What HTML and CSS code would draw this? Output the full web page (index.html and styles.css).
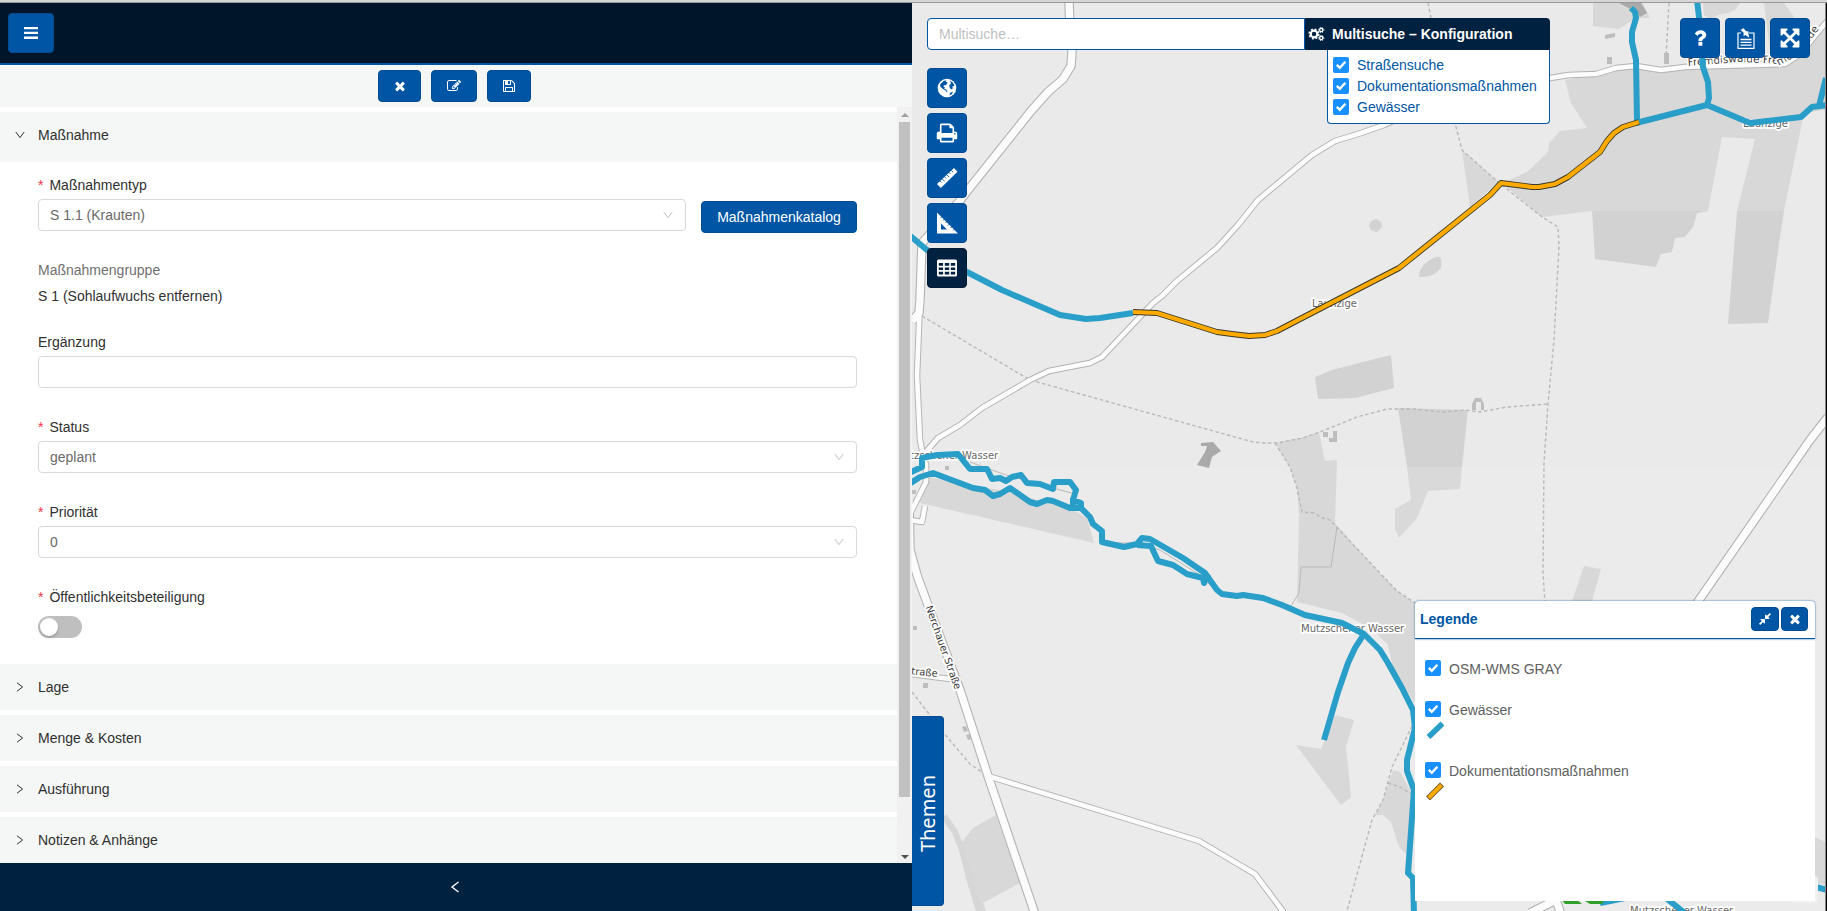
FILE: index.html
```html
<!DOCTYPE html>
<html lang="de">
<head>
<meta charset="utf-8">
<title>Maßnahme</title>
<link rel="stylesheet" href="styles.css">
</head>
<body>
<svg class="sprite" width="0" height="0">
  <symbol id="i-times" viewBox="0 0 1792 1792"><path d="M1490 1322q0 40-28 68l-136 136q-28 28-68 28t-68-28l-294-294-294 294q-28 28-68 28t-68-28l-136-136q-28-28-28-68t28-68l294-294-294-294q-28-28-28-68t28-68l136-136q28-28 68-28t68 28l294 294 294-294q28-28 68-28t68 28l136 136q28 28 28 68t-28 68l-294 294 294 294q28 28 28 68z"/></symbol>
  <symbol id="i-edit" viewBox="0 0 1792 1792"><path d="M888 1184l116-116-152-152-116 116v56h96v96h56zm440-720q-16-16-33 1l-350 350q-17 17-1 33t33-1l350-350q17-17 1-33zm80 594v190q0 119-84.5 203.5t-203.5 84.5h-832q-119 0-203.5-84.5t-84.5-203.5v-832q0-119 84.5-203.5t203.5-84.5h832q63 0 117 25 15 7 18 23 3 17-9 29l-49 49q-14 14-32 8-23-6-45-6h-832q-66 0-113 47t-47 113v832q0 66 47 113t113 47h832q66 0 113-47t47-113v-126q0-13 9-22l64-64q15-15 35-7t20 29zm-96-738l288 288-672 672h-288v-288zm444 132l-92 92-288-288 92-92q28-28 68-28t68 28l152 152q28 28 28 68t-28 68z"/></symbol>
  <symbol id="i-save" viewBox="0 0 1792 1792"><path d="M512 1536h768v-384h-768v384zm896 0h128v-896q0-14-10-38.5t-20-34.5l-281-281q-10-10-34-20t-39-10v416q0 40-28 68t-68 28h-576q-40 0-68-28t-28-68v-416h-128v1280h128v-416q0-40 28-68t68-28h832q40 0 68 28t28 68v416zm-384-928v-320q0-13-9.5-22.5t-22.5-9.5h-192q-13 0-22.5 9.5t-9.5 22.5v320q0 13 9.5 22.5t22.5 9.5h192q13 0 22.5-9.5t9.5-22.5zm640 32v928q0 40-28 68t-68 28h-1344q-40 0-68-28t-28-68v-1344q0-40 28-68t68-28h928q40 0 88 20t76 48l280 280q28 28 48 76t20 88z"/></symbol>
  <symbol id="i-print" viewBox="0 0 1792 1792"><path d="M448 1536h896v-256h-896v256zm0-640h896v-384h-160q-40 0-68-28t-28-68v-160h-640v640zm1152 64q0-26-19-45t-45-19-45 19-19 45 19 45 45 19 45-19 19-45zm128 0v416q0 13-9.5 22.5t-22.5 9.5h-224v160q0 40-28 68t-68 28h-960q-40 0-68-28t-28-68v-160h-224q-13 0-22.5-9.5t-9.5-22.5v-416q0-79 56.5-135.5t135.5-56.5h64v-544q0-40 28-68t68-28h672q40 0 88 20t76 48l152 152q28 28 48 76t20 88v256h64q79 0 135.5 56.5t56.5 135.5z"/></symbol>
  <symbol id="i-expand" viewBox="0 0 1792 1792"><path d="M1411 541l-355 355 355 355 144-144q29-31 70-14 39 17 39 59v448q0 26-19 45t-45 19h-448q-42 0-59-40-17-39 14-69l144-144-355-355-355 355 144 144q31 30 14 69-17 40-59 40h-448q-26 0-45-19t-19-45v-448q0-42 40-59 39-17 69 14l144 144 355-355-355-355-144 144q-19 19-45 19-12 0-24-5-40-17-40-59v-448q0-26 19-45t45-19h448q42 0 59 40 17 39-14 69l-144 144 355 355 355-355-144-144q-31-30-14-69 17-40 59-40h448q26 0 45 19t19 45v448q0 42-39 59-13 5-25 5-26 0-45-19z"/></symbol>
  <symbol id="i-question" viewBox="0 0 1792 1792"><path d="M1088 1256v240q0 16-12 28t-28 12h-240q-16 0-28-12t-12-28v-240q0-16 12-28t28-12h240q16 0 28 12t12 28zm316-600q0 54-15.5 101t-35 76.5-55 59.5-57.5 43.5-61 35.5q-41 23-68.5 65t-27.5 67q0 17-12 32.5t-28 15.5h-240q-15 0-25.5-18.5t-10.5-37.5v-45q0-83 65-156.5t143-108.5q59-27 84-56t25-76q0-42-46.5-74t-107.5-32q-65 0-108 29-35 25-107 115-13 16-31 16-12 0-25-8l-164-125q-13-10-15.5-25t5.5-28q160-266 464-266 80 0 161 31t146 83 106 127.5 41 158.5z"/></symbol>
  <symbol id="i-compress" viewBox="0 0 1792 1792"><path d="M896 960v448q0 26-19 45t-45 19-45-19l-144-144-332 332q-10 10-23 10t-23-10l-114-114q-10-10-10-23t10-23l332-332-144-144q-19-19-19-45t19-45 45-19h448q26 0 45 19t19 45zm755-672q0 13-10 23l-332 332 144 144q19 19 19 45t-19 45-45 19h-448q-26 0-45-19t-19-45v-448q0-26 19-45t45-19 45 19l144 144 332-332q10-10 23-10t23 10l114 114q10 10 10 23z"/></symbol>
  <symbol id="i-chev" viewBox="0 0 12 12"><path d="M1.800 3L6 8.600 10.200 3" fill="none" stroke="currentColor" stroke-width="1"/></symbol>
  <symbol id="i-check" viewBox="0 0 16 16"><path d="M3.800 7.800l3 3 5.600-6" fill="none" stroke="#fff" stroke-width="2.400"/></symbol>
</svg>
<div class="window-edge"></div>
<div class="app">
  <section class="side">
    <header class="side-head">
      <button class="btn menu-btn"><svg width="14" height="14" viewBox="0 0 14 14"><path d="M0 1h14v2.300H0zM0 5.800h14v2.300H0zM0 10.600h14v2.300H0z"/></svg></button>
    </header>
    <div class="toolbar">
      <button class="btn t1"><svg class="i14"><use href="#i-times"/></svg></button>
      <button class="btn t2"><svg class="i14"><use href="#i-edit"/></svg></button>
      <button class="btn t3"><svg class="i14"><use href="#i-save"/></svg></button>
    </div>
    <div class="scroll-area">
      <div class="panels">
        <div class="panel-head open"><svg class="chev"><use href="#i-chev"/></svg>Maßnahme</div>
        <div class="form">
          <div class="row">
            <div class="item grow"><label class="req">Maßnahmentyp</label><div class="select">S 1.1 (Krauten)<svg class="chev"><use href="#i-chev"/></svg></div></div>
            <button class="btn catalog">Maßnahmenkatalog</button>
          </div>
          <div class="item group"><label class="muted">Maßnahmengruppe</label><div>S 1 (Sohlaufwuchs entfernen)</div></div>
          <div class="item"><label>Ergänzung</label><div class="select"></div></div>
          <div class="item"><label class="req">Status</label><div class="select">geplant<svg class="chev"><use href="#i-chev"/></svg></div></div>
          <div class="item"><label class="req">Priorität</label><div class="select">0<svg class="chev"><use href="#i-chev"/></svg></div></div>
          <div class="item last"><label class="req">Öffentlichkeitsbeteiligung</label><div class="switch"><span class="knob"></span></div></div>
        </div>
        <div class="panel-head"><svg class="chev right"><use href="#i-chev"/></svg>Lage</div>
        <div class="panel-head"><svg class="chev right"><use href="#i-chev"/></svg>Menge &amp; Kosten</div>
        <div class="panel-head"><svg class="chev right"><use href="#i-chev"/></svg>Ausführung</div>
        <div class="panel-head"><svg class="chev right"><use href="#i-chev"/></svg>Notizen &amp; Anhänge</div>
      </div>
      <div class="scrollbar"><span class="up"></span><span class="thumb"></span><span class="down"></span></div>
    </div>
    <footer class="side-foot"><svg width="10" height="14" viewBox="0 0 10 14"><path d="M8.500 2L2 7l6.500 5" fill="none" stroke="#fff" stroke-width="1.400"/></svg></footer>
  </section>

  <section class="map">
    <svg class="map-canvas" width="913" height="908" viewBox="912 3 913 908">
      <rect x="912" y="3" width="913" height="464" fill="#eaeaea"/>
      <rect x="912" y="467" width="913" height="444" fill="#ebebeb"/>
      <g fill="#d8d8d8">
        <path d="M1565 80L1571 103 1587 128 1560 131 1549 143 1548 152 1527 172 1502 183 1542 217 1592 211H1708L1722 137 1755 139 1737 211H1784L1804 113 1825 110V20L1800 50 1785 62 1740 64 1685 67 1661 70 1636 66 1616 68 1596 74Z"/>
        <path d="M1462 150L1498 182 1470 207Z"/>
        <path d="M1593 3V26L1619 29 1636 18 1650 18 1643 3Z"/>
        <path d="M1703 3H1740L1735 10 1727 13 1718 15 1710 20 1704 15ZM1764 3H1784L1794 17V50H1770Z"/>
        <path d="M1275 443L1300 438 1319 432 1325 461 1337 460 1335 523 1363 555 1397 591 1415 603V704L1393 668 1388 645 1373 630 1342 613 1297 602 1299 513 1297 488 1290 467Z"/>
        <path d="M1335 715L1354 720 1346 747 1351 797 1341 805 1296 745 1321 749Z"/>
        <path d="M1393 770L1400 772 1413 795 1412 875 1407 855 1399 847 1391 822 1383 815H1375L1383 800Z"/>
        <path d="M928 477L1010 492 1073 510 1087 518 1094 543 920 503Z"/>
        <path d="M996 815L973 828 962 842 978 911H986L983 903 1020 883Z"/>
        <path d="M1584 566L1601 569 1592 601H1572ZM1800 830L1825 842V885L1800 880Z"/>
      </g>
      <g fill="#d2d2d2">
        <path d="M1592 211L1595 259 1656 267 1661 254 1672 252 1675 238 1685 237 1693 227 1697 213 1708 211ZM1737 211L1728 324 1768 323 1781 230 1784 211Z"/>
        <path d="M1371 221l5-2 5 3 1 5-5 5-6-2-2-4z"/><path d="M1419 277q0-9 8-15t13-5q2 2 1 11-8 10-22 9z"/>
        <path d="M1315 377L1332 370 1363 362 1391 355 1394 388 1355 398 1318 399Z"/>
        <path d="M1398 408L1468 410 1462 467H1407Z"/>
      </g>
      <path d="M1407 467H1462L1460 489 1428 491 1417 518 1399 538 1395 528V509L1411 500Z" fill="#d9d9d9"/>
      <path d="M944 816L955 832 962 850 969 878 979 911" fill="none" stroke="#d6d6d6" stroke-width="6"/>
      <path d="M1201 443L1213 442 1221 451 1212 457 1209 468 1197 465 1205 452 1207 446 1201 446ZM1619 3L1636 12 1640 17 1647 13 1641 3Z" fill="#aaa"/>
      <g fill="#bdbdbd">
        <path d="M945 466h4v4h-4zM912 490h4v4h-4zM913 626h4v4h-4zM923 683h5v5h-5zM962 727l4-1 2 5-4 1zM966 735l4-1 2 5-4 1z"/>
        <path d="M1323 432h5v5h-5zM1333 431h4v11h-8v-4h4zM1605 35l10-2v4l-10 2zM1607 57h5v7h-5zM1664 53h5v11h-5zM1472 410v-6l3-6h6l3 6v6h-3v-8h-5v8z"/>
      </g>
      <g fill="none" stroke="#b9b9b9" stroke-width="1.400" stroke-dasharray="3.500 2.500">
        <path d="M922 316L1030 380 1253 442 1263 443 1277 443 1303 438 1320 432 1357 417 1387 409H1413L1443 412 1465 410 1480 412 1507 407 1548 404"/>
        <path d="M1428 3L1431 18 1456 127 1462 150 1498 182 1542 217 1558 227 1559 247 1554 340 1548 404 1544 463 1543 573 1545 603"/>
        <path d="M1275 443L1290 467 1297 488 1302 512 1315 513 1320 517 1330 520 1363 555 1397 591 1415 603"/>
        <path d="M1412 726L1392 767 1383 800 1372 820 1347 911M1388 783L1400 787 1413 795"/>
        <path d="M912 692L943 732 970 764 983 773M1669 3L1666 57"/>
      </g>
      <path d="M1337 527L1331 567 1301 567 1299 593 1291 606M970 462L1006 475 1075 494M1105 543H1137L1160 550 1200 575 1215 590" fill="none" stroke="#b9b9b9"/>
      <g fill="none" stroke-linejoin="round">
        <g stroke="#b3b3b3">
          <path stroke-width="9.500" d="M1069 0L1070 30 1072 52 1071 66 1063 79 1048 92 1031 111 968 190 958 203 922 243 920 300 919 313 912 321"/>
          <path stroke-width="6.500" d="M920 300L917 376 920 440 923 455 926 465 926 482 910 514M910 520L922 522 925 506M910 674L950 679"/>
          <path stroke-width="9.500" d="M909 500L910 550 917 575 925 597 960 690 988 776 1035 914"/>
          <path stroke-width="6.500" d="M988 776L1199 841 1255 874 1285 914M925 453L938 438 960 425 982 408 1030 380 1049 371 1090 363 1102 357 1153 303 1162 296 1177 281 1217 248 1238 225 1258 200 1312 155 1335 141 1358 134 1384 125 1450 95 1550 78 1569 75 1596 74 1616 68 1636 66 1661 70 1685 67 1785 64 1800 54 1828 20"/>
          <path stroke-width="9.500" d="M1828 417L1810 440 1690 613M1556 900L1530 913M1556 900L1561 914"/>
        </g>
        <g stroke="#fcfcfc">
          <path stroke-width="7.300" d="M1069 0L1070 30 1072 52 1071 66 1063 79 1048 92 1031 111 968 190 958 203 922 243 920 300 919 313 912 321"/>
          <path stroke-width="4.600" d="M920 300L917 376 920 440 923 455 926 465 926 482 910 514M910 520L922 522 925 506M910 674L950 679"/>
          <path stroke-width="7.300" d="M909 500L910 550 917 575 925 597 960 690 988 776 1035 914"/>
          <path stroke-width="4.600" d="M988 776L1199 841 1255 874 1285 914M925 453L938 438 960 425 982 408 1030 380 1049 371 1090 363 1102 357 1153 303 1162 296 1177 281 1217 248 1238 225 1258 200 1312 155 1335 141 1358 134 1384 125 1450 95 1550 78 1569 75 1596 74 1616 68 1636 66 1661 70 1685 67 1785 64 1800 54 1828 20"/>
          <path stroke-width="7.300" d="M1828 417L1810 440 1690 613M1556 900L1530 913M1556 900L1561 914"/>
        </g>
      </g>
      <g class="map-label">
        <text x="1312" y="306.500">Launzige</text>
        <text x="1743" y="126.500">Launzige</text>
        <text x="895" y="459">Mutzschener Wasser</text>
        <text x="1301" y="631.500">Mutzschener Wasser</text>
        <text x="1630" y="914">Mutzschener Wasser</text>
        <path id="street" d="M1688 66L1740 62 1782 64 1800 54 1826 20" fill="none"/>
        <text class="dark wide"><textPath href="#street">Fremdiswalde Fremdiswalde</textPath></text>
        <text class="dark" transform="translate(925.500 607) rotate(70.500)">Nerchauer Straße</text>
        <text class="dark" transform="translate(937.500 677) rotate(6)" text-anchor="end">Straße</text>
      </g>
      <g fill="none" stroke="#289ec8" stroke-width="6" stroke-linejoin="round">
        <path d="M908 234L927 250 967 272 1002 290 1060 315 1086 319 1100 318 1133 313"/>
        <path d="M1637 121L1636 60 1632 42V32L1636 18 1635 12 1631 8"/>
        <path d="M1636 123L1707 105 1750 123 1801 117 1812 107 1828 105M1697 0L1699 17 1703 67 1708 82 1709 98 1707 105M1819 106L1826 78"/>
        <path d="M909 473L922 467V458L937 455 958 454 970 469H987L992 479 1000 478 1006 481 1012 477 1021 475 1027 483 1040 484 1053 489 1054 482H1070L1076 490 1073 500 1081 503V508"/>
        <path d="M1073 498V508M909 484L920 477 933 473 973 488 985 490 993 496 1000 494 1010 488 1030 502 1037 504 1047 500 1053 501 1070 508 1081 508 1090 517 1093 524 1102 531V542L1124 547 1137 544 1142 538 1150 539 1183 558 1205 573 1217 590 1222 594 1237 596 1243 595 1263 598 1282 605 1305 615 1342 623 1364 634 1380 650 1388 663 1402 688 1413 710 1415 728 1407 760V771L1414 790 1408 873 1413 878 1414 914"/>
        <path d="M1137 545L1151 546 1158 561 1173 565 1187 574 1203 578 1204 583 1208 574M1364 634L1355 648 1348 663 1338 692 1324 740"/>
        <path d="M1600 903L1625 898M1666 898L1686 914M1812 886L1827 890"/>
      </g>
      <path d="M1560 898L1565 904H1582L1575 898ZM1580 898L1590 904H1602L1606 898Z" fill="#33a02c"/>
      <g fill="none" stroke-linejoin="round">
        <path id="measure" stroke="#3b3a28" stroke-width="6" d="M1133 312L1157 313 1217 332 1232 334 1249 336 1265 335 1277 331 1300 319 1399 268 1490 195 1501 183 1532 187 1539 187 1555 184 1568 177 1600 152 1607 141 1614 133 1623 127 1639 122"/>
        <path stroke="#ffaa00" stroke-width="4.200" d="M1133 312L1157 313 1217 332 1232 334 1249 336 1265 335 1277 331 1300 319 1399 268 1490 195 1501 183 1532 187 1539 187 1555 184 1568 177 1600 152 1607 141 1614 133 1623 127 1639 122"/>
      </g>
      <rect x="1790" y="876" width="28" height="27" rx="4" fill="#f1f1f1"/>
    </svg>

    <div class="search">
      <div class="search-input">Multisuche…</div>
      <div class="search-config">
        <div class="config-title">
          <svg width="17" height="16" viewBox="0 0 17 16"><g fill="none" stroke="#fff"><circle cx="6" cy="8" r="3.300" stroke-width="2.200"/><circle cx="6" cy="8" r="4.900" stroke-width="1.400" stroke-dasharray="2 1.850"/><circle cx="13.200" cy="4" r="1.600" stroke-width="1.300"/><circle cx="13.200" cy="4" r="2.600" stroke-width="1" stroke-dasharray="1.100 .95"/><circle cx="13.200" cy="12" r="1.600" stroke-width="1.300"/><circle cx="13.200" cy="12" r="2.600" stroke-width="1" stroke-dasharray="1.100 .95"/></g></svg>
          Multisuche – Konfiguration
        </div>
        <div class="config-list">
          <div class="check"><svg class="box"><use href="#i-check"/></svg>Straßensuche</div>
          <div class="check"><svg class="box"><use href="#i-check"/></svg>Dokumentationsmaßnahmen</div>
          <div class="check"><svg class="box"><use href="#i-check"/></svg>Gewässer</div>
        </div>
      </div>
    </div>

    <div class="tools">
      <button class="btn sq"><svg width="20" height="20" viewBox="0 0 20 20"><circle cx="10" cy="10" r="9.300"/><path class="cut" d="M3 6.500L6.500 3 9.500 2.200 8.500 3.800 10.800 4.500 9.800 6 8.500 7.500 7 7 6.500 8.500 8 9.500 7 10.500 9 11.500 10.500 13 9.500 14.500 9 12.800 6 11 3.500 9ZM13 2.600L16 4.800 17.500 8 15.500 8.200 15.800 10.500 14 11.500 12.700 9.500 12.200 7.500 14 5.500ZM13 15L16 13.500 15 16 12.500 17.500Z"/></svg></button>
      <button class="btn sq"><svg class="i22"><use href="#i-print"/></svg></button>
      <button class="btn sq"><svg width="22" height="22" viewBox="0 0 22 22"><path d="M1 17L18 1l3.500 3.700L4.800 21z"/><path class="tick" d="M4 14l1.500 1.500M6.200 11.900l2.500 2.500M8.500 9.700l1.500 1.500M10.700 7.600l2.500 2.500M13 5.500l1.500 1.500M15.200 3.300l2 2"/></svg></button>
      <button class="btn sq"><svg width="22" height="22" viewBox="0 0 22 22"><path fill-rule="evenodd" d="M1 .5L22 21.500H1zM5 11.500V17.500H11z"/><path class="tick" d="M6 4.500l-1.500 1.500M8.500 7l-1.500 1.500M11 9.500l-1.500 1.500M13.500 12l-1.500 1.500M16 14.500l-1.500 1.500M18.500 17l-1.500 1.500"/></svg></button>
      <button class="btn sq active"><svg width="20" height="18" viewBox="0 0 20 18"><path fill-rule="evenodd" d="M1.500.5h17q1.500 0 1.500 1.500v14q0 1.500-1.500 1.500h-17Q0 17.500 0 16V2Q0 .5 1.500.5zM1.800 4v2.700h4.300V4zm6 0v2.700h4.400V4zm6 0v2.700h4.400V4zM1.800 8.400v2.700h4.300V8.400zm6 0v2.700h4.400V8.400zm6 0v2.700h4.400V8.400zM1.800 12.800v2.700h4.300v-2.700zm6 0v2.700h4.400v-2.700zm6 0v2.700h4.400v-2.700z"/></svg></button>
    </div>

    <div class="actions">
      <button class="btn sq"><svg class="i22"><use href="#i-question"/></svg></button>
      <button class="btn sq"><svg class="note" width="20" height="22" viewBox="0 0 20 22"><path d="M5 5H2v15.300h16V5h-5" fill="none" stroke="#fff" stroke-width="1.200"/><path d="M4.500 11.500h11M4.500 14.300h11M4.500 17.100h11" stroke="#fff" stroke-width="1.300"/><path d="M4.500 2L7.500.3l2.700 3 2.500.2-.3 2 .8 4.200-3.700-2.700-2 1.300.2-3.600z"/></svg></button>
      <button class="btn sq"><svg class="i22"><use href="#i-expand"/></svg></button>
    </div>

    <button class="btn themes"><span>Themen</span></button>

    <div class="legend">
      <div class="legend-head"><span class="legend-title">Legende</span>
        <button class="btn small"><svg class="i14"><use href="#i-compress"/></svg></button>
        <button class="btn small x"><svg class="i14"><use href="#i-times"/></svg></button>
      </div>
      <div class="legend-body">
        <div class="entry first"><svg class="box"><use href="#i-check"/></svg><span>OSM-WMS GRAY</span></div>
        <div class="entry"><svg class="box"><use href="#i-check"/></svg><span>Gewässer</span></div>
        <svg class="swatch" viewBox="0 0 18 18"><path d="M2.500 16l14-13.500" stroke="#289ec8" stroke-width="5.600"/></svg>
        <div class="entry"><svg class="box"><use href="#i-check"/></svg><span>Dokumentationsmaßnahmen</span></div>
        <svg class="swatch" viewBox="0 0 18 18"><path d="M2 16.500l14-14" stroke="#6b5320" stroke-width="5.600"/><path d="M2.600 15.900l12.800-12.800" stroke="#ffaa00" stroke-width="4"/></svg>
      </div>
    </div>
  </section>
  <div class="screen-edge"></div>
</div>
</body>
</html>
```

FILE: styles.css
```css
* { box-sizing: border-box; }
body {
  margin: 0;
  width: 1827px;
  height: 911px;
  overflow: hidden;
  display: flex;
  flex-direction: column;
  font: 14px/22px "Liberation Sans", Arial, sans-serif;
  color: #303030;
  background: #fff;
}
.sprite { position: absolute; }
svg { display: block; flex: none; }
.window-edge { height: 3px; flex: none; background: #d5d5d5; border-bottom: 1px solid #999; }
.app { display: flex; flex: 1; min-height: 0; }
.side { width: 912px; display: flex; flex-direction: column; }

.btn {
  display: flex;
  align-items: center;
  justify-content: center;
  padding: 0;
  border: 1px solid #004b91;
  border-radius: 4px;
  background: #0056a5;
  color: #fff;
  fill: #fff;
  font: inherit;
}
.i14 { width: 14px; height: 14px; }
.i22 { width: 22px; height: 22px; }

.side-head { height: 62px; flex: none; background: #001529; border-bottom: 2px solid #0056a5; padding: 10px 8px; }
.menu-btn { width: 46px; height: 40px; padding-bottom: 1px; }
.toolbar { height: 42px; flex: none; display: flex; justify-content: center; gap: 10px; padding: 5px 3px 0 0; background: #f4f7f6; }
.toolbar .btn { height: 32px; }
.toolbar .t1 { width: 43px; }
.toolbar .t2 { width: 46px; }
.toolbar .t3 { width: 44px; }

.scroll-area { flex: 1; min-height: 0; display: flex; }
.panels { flex: 1; padding-top: 5px; }
.panel-head { height: 46px; display: flex; align-items: center; gap: 12px; padding-left: 14px; background: #f4f7f6; margin-bottom: 5px; }
.panel-head:last-child { margin-bottom: 0; }
.panel-head.open { height: 50px; margin: 0; padding-bottom: 4px; }
.chev { width: 12px; height: 12px; }
.chev.right { transform: rotate(-90deg); }

.form { height: 502px; padding: 12px 40px 0 38px; }
.row { display: flex; gap: 15px; }
.grow { flex: 1; }
.item { height: 85px; display: flex; flex-direction: column; gap: 3px; }
.item.group { height: 72px; gap: 4px; }
.item.last { gap: 8px; }
.muted { color: #707070; }
.req::before { content: "*"; color: #f5323c; margin-right: 6px; }
.select {
  height: 32px;
  display: flex;
  align-items: center;
  justify-content: space-between;
  padding: 0 11px;
  border: 1px solid #d9d9d9;
  border-radius: 4px;
  color: #6a6a6a;
}
.select .chev { color: #bfbfbf; }
.catalog { width: 156px; height: 32px; margin-top: 27px; }
.switch { width: 44px; height: 22px; border-radius: 11px; padding: 2px; background: #bfbfbf; }
.knob { display: block; width: 18px; height: 18px; border-radius: 50%; background: #fff; box-shadow: 0 2px 3px rgba(0, 35, 11, .2); }

.scrollbar { width: 15px; display: flex; flex-direction: column; align-items: center; background: #f1f1f1; padding: 6px 0 4px; }
.up { border: 4px solid transparent; border-bottom-color: #a0a0a0; border-top: 0; }
.thumb { width: 11px; height: 675px; margin-top: 5px; background: #c1c1c1; }
.down { border: 4px solid transparent; border-top-color: #505050; border-bottom: 0; margin-top: auto; }

.side-foot { height: 48px; flex: none; display: flex; align-items: center; justify-content: center; padding-right: 2px; background: #002140; }

.map { width: 913px; position: relative; overflow: hidden; }
.screen-edge { width: 2px; background: #000; border-left: 1px solid #888; }
.map-label { font: 10px "DejaVu Sans", sans-serif; fill: #666; stroke: #fff; stroke-width: 3.5px; stroke-linejoin: round; paint-order: stroke; }
.map-label path { stroke: none; }
.map-label .dark { fill: #3c3c3c; }
.map-label .wide { font-size: 10.4px; }

.search { position: absolute; left: 15px; top: 15px; display: flex; align-items: flex-start; }
.search-input { width: 378px; height: 32px; padding: 0 11px; line-height: 30px; background: #fff; border: 1px solid #0056a5; border-radius: 4px 0 0 4px; color: #bfbfbf; }
.search-config { width: 245px; display: flex; flex-direction: column; align-items: flex-end; }
.config-title { width: 245px; height: 32px; display: flex; align-items: center; gap: 7px; padding-left: 3px; background: #002140; border-radius: 0 4px 0 0; color: #fff; font-weight: bold; white-space: nowrap; }
.config-list { width: 223px; height: 74px; padding: 4px 5px; background: #fff; border: 1px solid #0056a5; border-top: 0; border-radius: 0 0 4px 4px; color: #0056a5; }
.check { height: 21px; display: flex; align-items: center; gap: 8px; }
.box { width: 16px; height: 16px; border-radius: 2px; background: #1890ff; }

.tools { position: absolute; left: 15px; top: 65px; display: flex; flex-direction: column; gap: 5px; }
.sq { width: 40px; height: 40px; }
.sq.active { background: #002140; border-color: #001a33; }
.cut { fill: #0056a5; }
.tick { stroke: #0056a5; stroke-width: .9; fill: none; }
.note { margin: 0 0 -2px 2px; }
.actions { position: absolute; right: 15px; top: 15px; display: flex; gap: 5px; }

.themes { position: absolute; left: 0; top: 713px; width: 32px; height: 190px; padding-top: 6px; border-radius: 0 4px 4px 0; border-left: 0; }
.themes span { writing-mode: vertical-rl; transform: rotate(180deg); font: 20px/28px "Noto Sans", sans-serif; }

.legend { position: absolute; left: 503px; top: 598px; width: 400px; height: 300px; background: #fff; border-radius: 4px 4px 0 0; }
.legend-head { height: 38px; display: flex; align-items: center; gap: 2px; padding: 0 7px 1px 5px; border-bottom: 1px solid #0056a5; border-radius: 4px 4px 0 0; box-shadow: 0 0 2px #0056a5; }
.legend-title { flex: 1; font-weight: bold; color: #0056a5; }
.small { width: 28px; height: 24px; }
.small.x { width: 27px; }
.legend-body { display: flex; flex-direction: column; padding: 18px 10px; color: #606060; }
.entry { height: 22px; display: flex; align-items: center; gap: 8px; }
.entry span { padding-top: 2px; }
.entry.first { margin-bottom: 19px; }
.swatch { width: 18px; height: 18px; margin: 1px 0 20px 1px; }
```
